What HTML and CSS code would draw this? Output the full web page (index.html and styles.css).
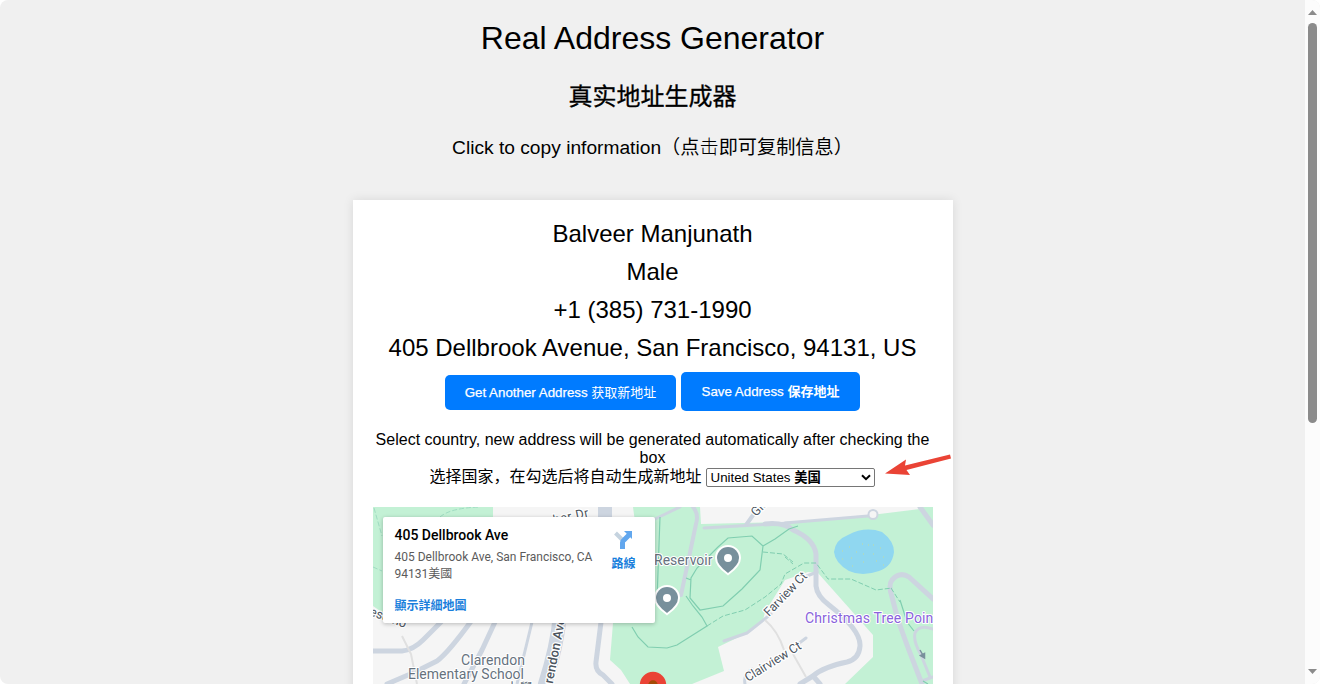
FILE: index.html
```html
<!DOCTYPE html>
<html lang="zh-CN">
<head>
<meta charset="utf-8">
<title>Real Address Generator</title>
<link rel="stylesheet" href="styles.css">
</head>
<body>
<div class="page">
  <main class="content">
    <h1 class="title">Real Address Generator</h1>
    <h2 class="subtitle">真实地址生成器</h2>
    <h3 class="hint">Click to copy information（点<span class="thin">击</span>即可复制信息）</h3>
    <section class="card">
      <p class="info">Balveer Manjunath</p>
      <p class="info">Male</p>
      <p class="info">+1 (385) 731-1990</p>
      <p class="info">405 Dellbrook Avenue, San Francisco, 94131, US</p>
      <div class="actions">
        <button class="btn btn-new">Get Another Address <span class="thin">获取新地址</span></button>
        <button class="btn btn-save">Save Address <b>保存地址</b></button>
      </div>
      <div class="country">
        <p class="country-text">Select country, new address will be generated automatically after checking the box</p>
        <div class="country-row">
          <label for="country">选择国家，在勾选后将自动生成新地址</label>
          <div class="select" id="country"><span>United States <b>美国</b></span>
            <svg class="chevron" width="10" height="7" viewBox="0 0 10 7"><path d="M1 1.2 5 5.2 9 1.2" fill="none" stroke="#000" stroke-width="2"/></svg>
          </div>
        </div>
      </div>
      <div class="map">
        <svg class="map-canvas" width="560" height="177" viewBox="373 507 560 177">
          <rect x="373" y="507" width="560" height="177" fill="#f5f5f5"/>
          <g fill="#c3f1d5">
            <path d="M373 507H493V560L383 613 373 606Z"/>
            <path d="M633 507H700L701 524 785 522 855 517 920 509V507H933V684H845L873 657V635L818 573 808 572 785 580 765 612 763 620 743 635 718 647 724 671 692 684H630L621 670 610 660 613 623 640 560Z"/>
          </g>
          <g class="road">
            <path stroke-width="5" d="M373 651H402Q413 650 423 640L441 622M387 684 415 672 437 661Q448 653 472 620M464 684 482 650 495 622"/>
            <path stroke-width="3" d="M517 684 524 655 532 622M655 519 680 507"/>
            <path stroke-width="5" d="M601 622 596 662Q595 671 603 675L612 684"/>
            <path stroke-width="14" d="M605 507V530M560 615Q557 647 545 684"/>
            <path stroke-width="4" d="M693 507Q699 514 696 524L688 562 681 595"/>
            <path stroke-width="3" d="M704 528 755 525 790 523"/>
            <path stroke-width="4" d="M746 525 756 511"/>
            <path stroke-width="3" d="M785 523 868 516M724 641 747 633 771 614M807 576 817 572M798 644 806 638M745 684Q743 675 752 669"/>
            <path stroke-width="5" d="M765 524Q784 522 793 530 814 539 816 554V586Q817 596 829 605 861 630 860 646 859 659 847 662 823 667 813 676L800 684"/>
            <path stroke-width="5" d="M813 676 820 684M920 507 933 525M933 599 909 577Q900 571 892 580 888 585 892 597L898 620 907 645 922 684"/>
            <path stroke-width="3" d="M933 629Q919 624 915 633 913 641 921 655L930 677M922 681 933 677"/>
          </g>
          <path class="lane" d="M402 636 411 654 417 684M765 620Q778 631 784 650M793 654 806 677"/>
          <path class="faint" d="M440 517Q450 508 480 507M374 508 382 536M373 567 382 571"/>
          <g class="trail">
            <path d="M660 517 657 600M718 547 728 538 752 536 763 546 760 570 742 589 723 606 700 610 690 598 691 578 697 568 718 547M691 580 686 578M686 596 693 606 702 617 707 626 677 645 667 648 648 647 638 637 632 627M763 546 775 539 789 529 798 526"/>
            <path class="dashed" d="M763 552 783 554 793 562M707 626 723 616 745 610 765 597 781 584 785 574 804 563 816 563 828 579 851 579 876 590 892 588M785 557 793 564M891 588 900 602"/>
            <path d="M900 600 907 622 914 631M923 681 928 684"/>
          </g>
          <path d="M834 552Q835 540 848 535 865 526 882 532 894 541 894 552 892 567 879 571 862 577 849 571 835 563 834 552Z" fill="#90d7f0"/>
          <path d="M842 551h1m-1 8h1m6-12h1m1 11h1m0 8h1m3-14h1m5-8h1m0 10h1m-1 8h1m4-17h1m4 0h1m-1 9h1m2 7h1m3-13h1m2 9h1m-1 8h1" stroke="#c3dc9e" stroke-width="1"/>
          <circle cx="873" cy="514.5" r="4.5" fill="#f5f5f5" stroke="#cdd5e0" stroke-width="2"/>
          <path d="M920 650 924 657M920.500 655.500 924.500 658 924.500 653.500Z" fill="#78909c" stroke="#78909c" stroke-width="1.5"/>
          <g class="place">
            <text x="654" y="565" textLength="58.5">Reservoir</text>
            <text x="461" y="665" textLength="64">Clarendon</text>
            <text x="408" y="679" textLength="116">Elementary School</text>
            <text x="505" y="693">小學</text>
          </g>
          <text class="park" x="805" y="623" textLength="133">Christmas Tree Point</text>
          <g class="street">
            <text transform="translate(554 524) rotate(-12)" textLength="36">ber Dr</text>
            <text transform="translate(756 517) rotate(-46)">Glenview</text>
            <text transform="translate(769 617) rotate(-46)" textLength="56">Farview Ct</text>
            <text transform="translate(748 682) rotate(-32)" textLength="64">Clairview Ct</text>
            <text transform="translate(369 615) rotate(20)">esumo</text>
            <text class="major" transform="translate(549 703) rotate(-79)" textLength="86">Clarendon Ave</text>
          </g>
          <g id="pins">
            <g transform="translate(728 558)"><path class="pin" d="M-11 0a11 11 0 1 1 22 0Q11 7 0 15-11 7-11 0Z"/><circle r="7"/></g>
            <g transform="translate(667 598)"><path class="pin" d="M-11 0a11 11 0 1 1 22 0Q11 7 0 15-11 7-11 0Z"/><circle r="7"/></g>
          </g>
          <circle cx="653" cy="685" r="13.2" fill="#ea4335"/>
          <circle cx="653" cy="685" r="4.7" fill="#a54b06"/>
        </svg>
        <aside class="place-card">
          <div class="place-text">
            <div class="place-name">405 Dellbrook Ave</div>
            <div class="place-address">405 Dellbrook Ave, San Francisco, CA<br>94131美國</div>
            <div class="place-link">顯示詳細地圖</div>
          </div>
          <div class="directions">
            <svg width="22" height="22" viewBox="0 0 22 22">
              <path d="M3.500 4 10 10.500" fill="none" stroke="#c5d3df" stroke-width="4"/>
              <path d="M10.500 20V13.500Q10.500 12 12 11L17 6" fill="none" stroke="#62a7ee" stroke-width="5"/>
              <path d="M12 2H20V10Z" fill="#62a7ee"/>
            </svg>
            <span>路線</span>
          </div>
        </aside>
      </div>
      <svg class="arrow" width="68" height="24" viewBox="884 453 68 24"><path d="M885 473.5 906 459.5 905 465.5 950 454.5 951 458.5 906.5 470 910 475Z" fill="#ea4335"/></svg>
    </section>
  </main>
  <div class="scrollbar">
    <svg width="9" height="5" viewBox="0 0 9 5"><path d="M4.5 0 9 5H0Z" fill="#8b8b8b"/></svg>
    <div class="thumb"></div>
    <svg width="9" height="5" viewBox="0 0 9 5"><path d="M0 0H9L4.5 5Z" fill="#8b8b8b"/></svg>
  </div>
</div>
</body>
</html>
```
FILE: styles.css
```css
* { box-sizing: border-box; }
body {
  margin: 0;
  height: 684px;
  overflow: hidden;
  background: #fff;
  color: #000;
  font-family: "Liberation Sans", "Noto Sans CJK SC", sans-serif;
}
.page {
  display: flex;
  height: 684px;
  background: #f0f0f0;
  border-radius: 8px;
  overflow: hidden;
}
.content {
  flex: 1;
  display: flex;
  flex-direction: column;
  align-items: center;
}
.title, .subtitle, .hint { margin: 0; font-weight: 400; white-space: nowrap; }
.title { margin-top: 20px; font-size: 32px; line-height: 36px; }
.subtitle { margin-top: 25px; font-size: 24px; line-height: 32px; -webkit-text-stroke: .3px; }
.hint { margin-top: 22px; font-size: 19.2px; line-height: 26px; }
.thin { font-weight: 300; }
.card {
  position: relative;
  width: 600px;
  height: 600px;
  margin-top: 39px;
  padding: 20px;
  flex: none;
  background: #fff;
  box-shadow: 0 0 10px rgba(0, 0, 0, .1);
  text-align: center;
}
.info { margin: 0 0 10px; font-size: 24px; line-height: 28px; white-space: nowrap; }
.actions {
  display: flex;
  justify-content: center;
  align-items: center;
  gap: 5px;
  height: 39px;
}
.btn {
  padding: 1px 0 0;
  border: 0;
  border-radius: 5px;
  background: #007bff;
  color: #fff;
  font: 13.33px/20px "Liberation Sans", "Noto Sans CJK SC", sans-serif;
  -webkit-text-stroke: .25px;
  white-space: nowrap;
}
.btn b, .btn .thin { font-size: 13px; -webkit-text-stroke: 0; }
.btn .thin { font-weight: 400; }
.btn-new { width: 231px; height: 35px; margin-top: 1px; }
.btn-save { width: 179px; height: 39px; }
.country { margin-top: 20px; font-size: 16px; line-height: 18px; }
.country-text { margin: 0; }
.country-row {
  display: flex;
  justify-content: center;
  align-items: center;
  gap: 4px;
  height: 20px;
  padding-right: 1px;
  white-space: nowrap;
}
.select {
  display: flex;
  align-items: center;
  justify-content: space-between;
  width: 169px;
  height: 19px;
  margin-top: 1px;
  padding: 0 3px 0 4px;
  border: 1px solid #767676;
  border-radius: 2px;
  background: #fff;
  font-size: 13.33px;
  line-height: 17px;
}
.map {
  position: relative;
  height: 177px;
  margin-top: 20px;
  overflow: hidden;
}
.map-canvas { display: block; }
.map-canvas text { font-family: Roboto, "Noto Sans CJK TC", sans-serif; paint-order: stroke; stroke-linejoin: round; }
.road path { fill: none; stroke: #cdd5e0; stroke-linecap: round; stroke-linejoin: round; }
.lane { fill: none; stroke: #e0e0e0; stroke-width: 2; }
.faint { fill: none; stroke: #9fdcc2; stroke-width: 1; stroke-dasharray: 5 2; }
.trail path { fill: none; stroke: #80ceb0; stroke-width: 1.2; }
.trail .dashed { stroke-dasharray: 5 2; stroke-width: 1; }
.place { font-size: 14px; fill: #66727e; stroke: #fff; stroke-width: 2px; }
.park { font-size: 14px; fill: #8a63dc; stroke: #fff; stroke-width: 2px; }
.street { font-size: 12.5px; fill: #4c5560; stroke: #fff; stroke-width: 2.5px; }
.major { font-size: 13px; font-weight: 500; }
.pin { fill: #78909c; stroke: #fff; stroke-width: 4px; paint-order: stroke; }
#pins circle { stroke: #78909c; stroke-width: 6px; fill: #fff; }
.place-card {
  position: absolute;
  left: 10px;
  top: 10px;
  display: flex;
  justify-content: space-between;
  width: 272px;
  height: 106px;
  padding: 10px 19px 0 12px;
  background: #fff;
  border-radius: 2px;
  box-shadow: 0 1px 4px rgba(0, 0, 0, .25);
  font-family: Roboto, "Noto Sans CJK TC", sans-serif;
  text-align: left;
  white-space: nowrap;
}
.place-name { font-size: 14px; font-weight: 500; line-height: 17px; }
.place-address { margin-top: 5px; font-size: 12px; line-height: 17px; color: #5b5b5b; }
.place-link { margin-top: 15px; font-size: 12px; font-weight: 700; line-height: 17px; color: #1a7fdc; }
.directions {
  display: flex;
  flex-direction: column;
  align-items: center;
  padding-top: 2px;
  font-size: 12px;
  font-weight: 700;
  line-height: 16px;
  color: #1a7fdc;
}
.directions span { margin-top: 5px; }
.arrow { position: absolute; left: 531px; top: 253px; }
.scrollbar {
  display: flex;
  flex-direction: column;
  align-items: center;
  width: 15px;
  padding: 10px 0;
  background: #fcfcfc;
}
.thumb {
  width: 9px;
  height: 400px;
  margin: 8px 0 auto;
  border-radius: 5px;
  background: #8b8b8b;
}
```
